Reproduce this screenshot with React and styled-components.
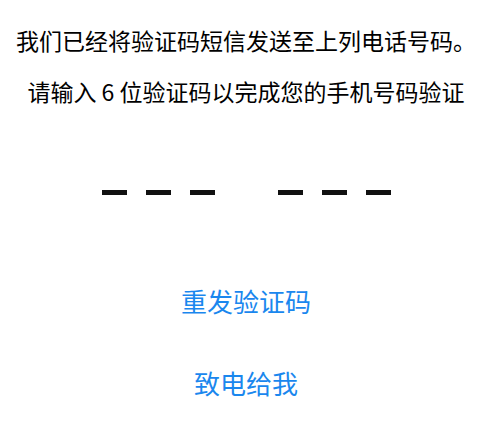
import React from "react";
import styled, { createGlobalStyle } from "styled-components";

const Global = createGlobalStyle`
  html, body { margin: 0; padding: 0; background: #fff; }
  body { font-family: "Noto Sans CJK SC", "Noto Sans", sans-serif; }
`;

const Page = styled.div`
  width: 492px;
  display: flex;
  flex-direction: column;
  align-items: center;
`;

const Message = styled.p`
  margin: 0;
  font-size: 23px;
  font-weight: 400;
  line-height: 32px;
  color: #000;
  white-space: nowrap;
  margin-top: ${(p) => p.$top}px;
`;

const CodeRow = styled.div`
  display: flex;
  align-items: center;
  gap: 63px;
  margin-top: 83px;
`;

const Group = styled.div`
  display: flex;
  gap: 19px;
`;

const Slot = styled.span`
  display: block;
  width: 25px;
  height: 5px;
  background: #111;
`;

const LinkButton = styled.button`
  border: 0;
  background: none;
  padding: 0;
  font-family: inherit;
  font-size: 26px;
  line-height: 36px;
  color: #1a87ee;
  cursor: pointer;
  margin-top: ${(p) => p.$top}px;
`;

export default function App() {
  return (
    <>
      <Global />
      <Page>
        <Message $top={24}>我们已经将验证码短信发送至上列电话号码。</Message>
        <Message $top={19}>请输入 6 位验证码以完成您的手机号码验证</Message>
        <CodeRow>
          <Group>
            <Slot />
            <Slot />
            <Slot />
          </Group>
          <Group>
            <Slot />
            <Slot />
            <Slot />
          </Group>
        </CodeRow>
        <LinkButton $top={88}>重发验证码</LinkButton>
        <LinkButton $top={46}>致电给我</LinkButton>
      </Page>
    </>
  );
}
